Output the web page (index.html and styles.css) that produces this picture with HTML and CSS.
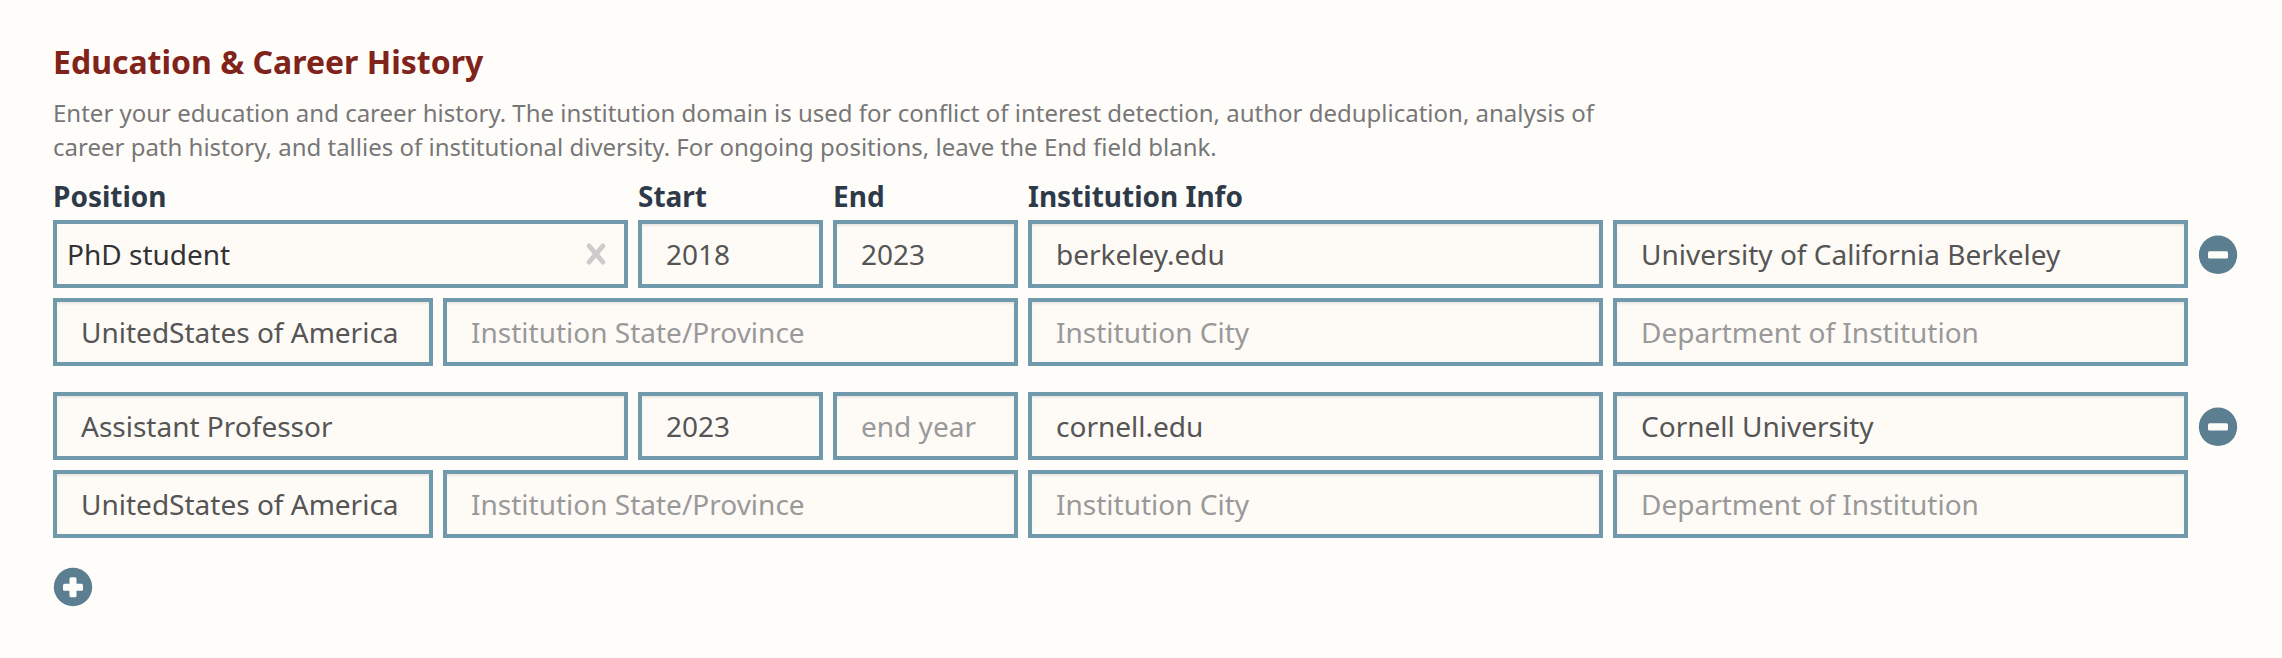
FILE: index.html
```html
<!DOCTYPE html>
<html lang="en">
<head>
<meta charset="utf-8">
<title>Education &amp; Career History</title>
<link rel="stylesheet" href="styles.css">
</head>
<body>
<section class="history">
  <h4 class="title">Education &amp; Career History</h4>
  <p class="instructions">Enter your education and career history. The institution domain is used for conflict of interest detection, author deduplication, analysis of career path history, and tallies of institutional diversity. For ongoing positions, leave the End field blank.</p>
  <div class="row labels">
    <div class="wide">Position</div>
    <div class="year">Start</div>
    <div class="year">End</div>
    <div class="wide">Institution Info</div>
  </div>
  <div class="entry">
    <div class="row">
      <div class="select wide">
        <span>PhD student</span>
        <svg class="clear" width="20" height="22" viewBox="0 0 20 22"><path d="M3.2 3 16.8 19M16.8 3 3.2 19"/></svg>
      </div>
      <input class="field year" value="2018">
      <input class="field year" value="2023">
      <input class="field wide" value="berkeley.edu">
      <input class="field wide" value="University of California Berkeley">
      <svg class="icon" width="40" height="40" viewBox="0 0 40 40"><circle cx="20" cy="20.8" r="19.2"/><rect x="10" y="17.2" width="20" height="7.4" rx="1.5"/></svg>
    </div>
    <div class="row">
      <input class="field country" value="UnitedStates of America">
      <input class="field wide" placeholder="Institution State/Province">
      <input class="field wide" placeholder="Institution City">
      <input class="field wide" placeholder="Department of Institution">
    </div>
  </div>
  <div class="entry">
    <div class="row">
      <input class="field wide" value="Assistant Professor">
      <input class="field year" value="2023">
      <input class="field year" placeholder="end year">
      <input class="field wide" value="cornell.edu">
      <input class="field wide" value="Cornell University">
      <svg class="icon" width="40" height="40" viewBox="0 0 40 40"><circle cx="20" cy="20.8" r="19.2"/><rect x="10" y="17.2" width="20" height="7.4" rx="1.5"/></svg>
    </div>
    <div class="row">
      <input class="field country" value="UnitedStates of America">
      <input class="field wide" placeholder="Institution State/Province">
      <input class="field wide" placeholder="Institution City">
      <input class="field wide" placeholder="Department of Institution">
    </div>
  </div>
  <svg class="icon add" width="40" height="40" viewBox="0 0 40 40"><circle cx="20" cy="20" r="19.2"/><rect x="10" y="16.8" width="20" height="7" rx="1.5"/><rect x="16.5" y="10.2" width="7" height="20" rx="1.5"/></svg>
</section>
</body>
</html>
```
FILE: styles.css
```css
* { box-sizing: border-box; }

body {
  margin: 0;
  background: #fffdfa;
  font-family: "Noto Sans", sans-serif;
  font-size: 28px;
  color: #333;
}

.history { padding: 40px 40px 0 53px; }

.title {
  margin: 0 0 12px;
  font-size: 32px;
  line-height: 44px;
  font-weight: 700;
  color: #80241b;
}

.instructions {
  width: 1560px;
  margin: 0 0 12px;
  font-size: 24px;
  line-height: 34px;
  color: #777;
}

.row {
  display: flex;
  align-items: center;
  gap: 10px;
}

.labels {
  margin-bottom: 4px;
  line-height: 40px;
  font-weight: 700;
  color: #2e3a49;
}

.entry {
  display: flex;
  flex-direction: column;
  gap: 10px;
  margin-bottom: 26px;
}

.wide { flex: none; width: 575px; }
.year { flex: none; width: 185px; }
.country { flex: none; width: 380px; }

.field,
.select {
  height: 68px;
  border: 4px solid #7099ac;
  border-radius: 0;
  background: #fefbf7;
}

.field {
  padding: 0 24px;
  font: inherit;
  color: #555;
  box-shadow: inset 0 2px 2px rgba(0, 0, 0, 0.075);
}

.field.country { padding-right: 10px; }
.field::placeholder { color: #999; opacity: 1; }

.select {
  display: flex;
  align-items: center;
  justify-content: space-between;
  padding: 0 18px 0 10px;
}

.clear {
  fill: none;
  stroke: #ccc;
  stroke-width: 5;
  stroke-linecap: round;
}

.icon { display: block; flex: none; }
.icon circle { fill: #5b7e91; }
.icon rect { fill: #fffdfa; }
.add { margin-top: 29px; }
```
